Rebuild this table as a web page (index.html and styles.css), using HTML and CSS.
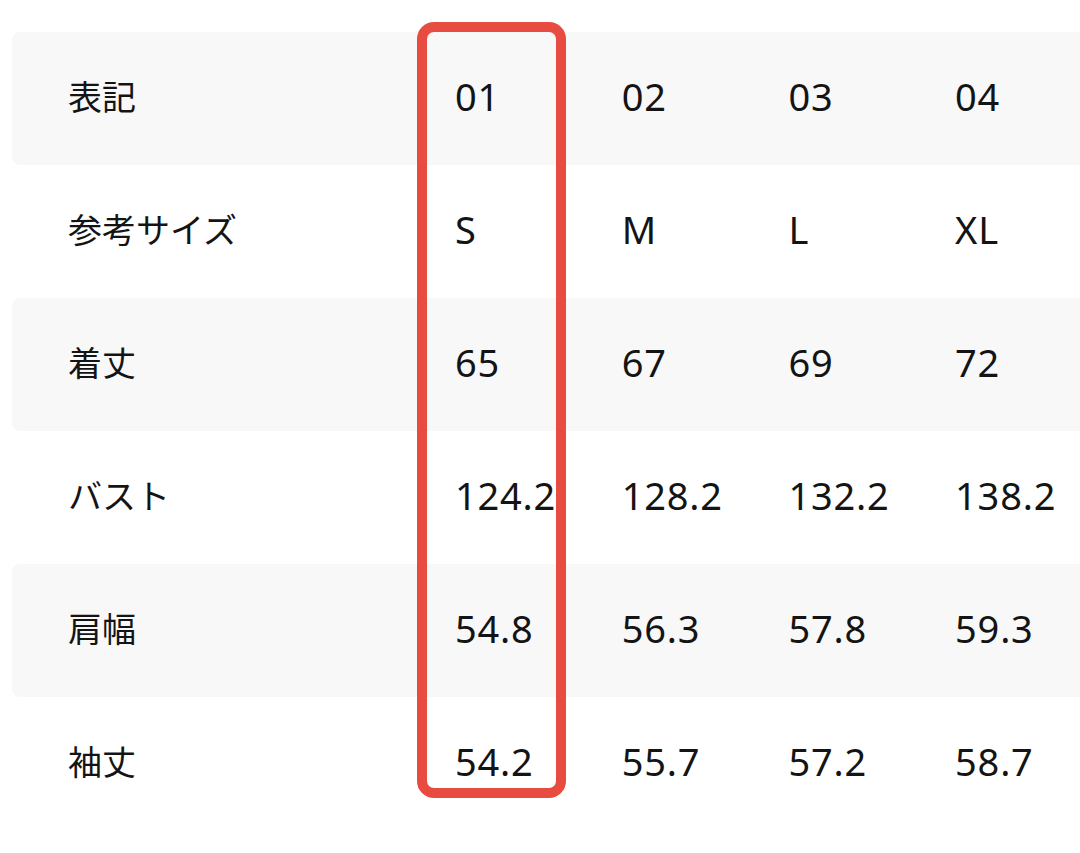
FILE: index.html
```html
<!DOCTYPE html>
<html lang="ja">
<head>
<meta charset="utf-8">
<link rel="stylesheet" href="styles.css">
</head>
<body>
<div class="sheet">
  <div class="table">
    <div class="row shade"><div class="cell label">表記</div><div class="cell">01</div><div class="cell">02</div><div class="cell">03</div><div class="cell">04</div></div>
    <div class="row"><div class="cell label">参考サイズ</div><div class="cell">S</div><div class="cell">M</div><div class="cell">L</div><div class="cell">XL</div></div>
    <div class="row shade"><div class="cell label">着丈</div><div class="cell">65</div><div class="cell">67</div><div class="cell">69</div><div class="cell">72</div></div>
    <div class="row"><div class="cell label">バスト</div><div class="cell">124.2</div><div class="cell">128.2</div><div class="cell">132.2</div><div class="cell">138.2</div></div>
    <div class="row shade"><div class="cell label">肩幅</div><div class="cell">54.8</div><div class="cell">56.3</div><div class="cell">57.8</div><div class="cell">59.3</div></div>
    <div class="row"><div class="cell label">袖丈</div><div class="cell">54.2</div><div class="cell">55.7</div><div class="cell">57.2</div><div class="cell">58.7</div></div>
  </div>
  <div class="highlight"></div>
</div>
</body>
</html>
```
FILE: styles.css
```css
html, body {
  margin: 0;
  padding: 0;
  background: #ffffff;
}
.sheet {
  position: relative;
  width: 1080px;
  height: 853px;
  overflow: hidden;
  font-family: "Noto Sans", "Noto Sans CJK JP", sans-serif;
  color: #141414;
}
.table {
  display: flex;
  flex-direction: column;
  padding: 32px 0 0 12px;
}
.row {
  display: flex;
  align-items: center;
  height: 133px;
  width: 1140px;
  padding-left: 56px;
  padding-bottom: 5px;
  box-sizing: border-box;
  border-radius: 8px 0 0 8px;
}
.row.shade {
  background: #f8f8f8;
}
.cell {
  flex: 0 0 166.7px;
  font-size: 38px;
  line-height: 1;
  white-space: nowrap;
  letter-spacing: 0.8px;
}
.cell.label {
  flex: 0 0 387px;
  font-family: "Noto Sans CJK JP", sans-serif;
  font-size: 34px;
  letter-spacing: 0;
}
.highlight {
  position: absolute;
  left: 417px;
  top: 22px;
  width: 149px;
  height: 776px;
  box-sizing: border-box;
  border: 10px solid #e84c40;
  border-radius: 17px;
}
```
